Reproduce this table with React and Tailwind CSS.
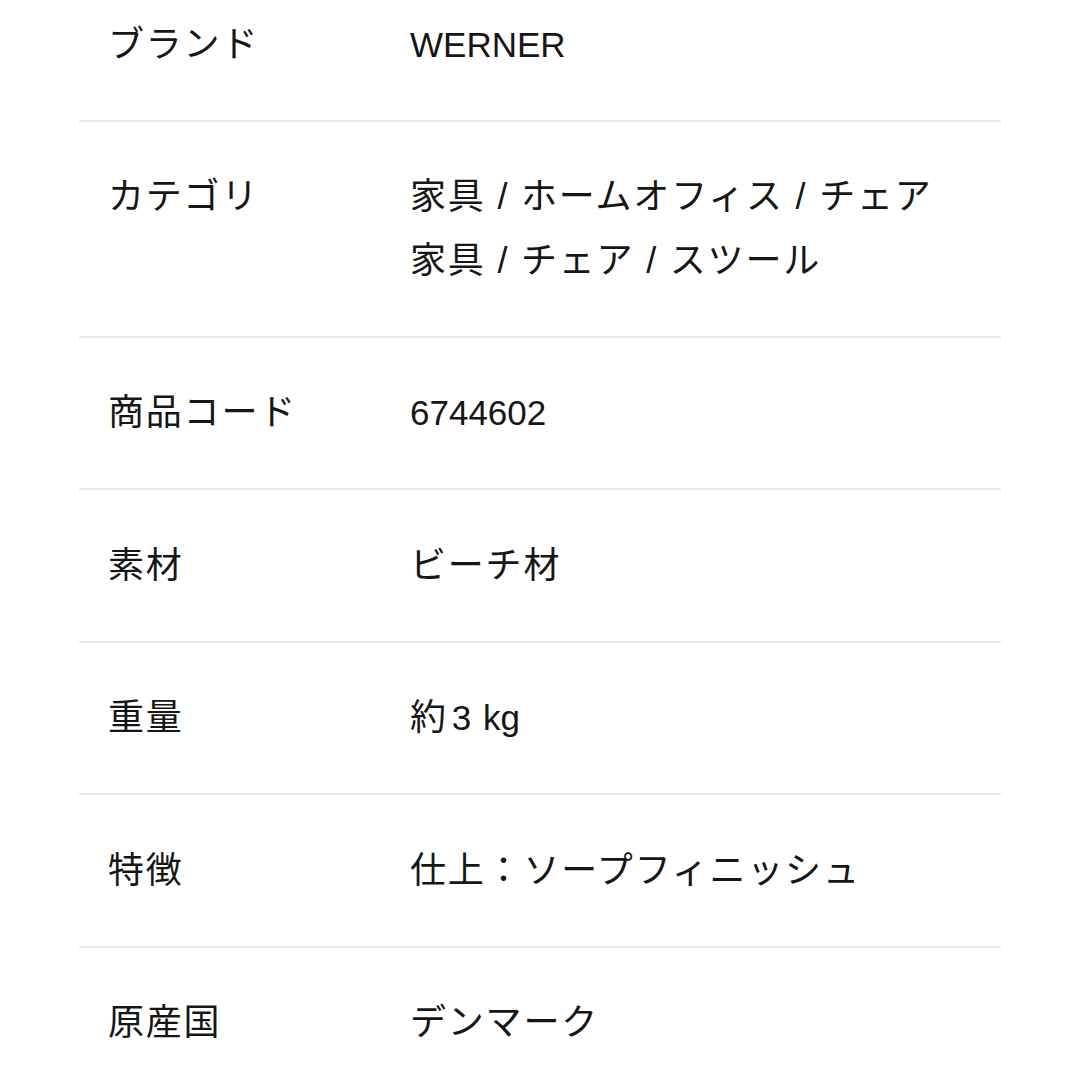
import React from "react";

const specs = [
  { label: "ブランド", values: ["WERNER"] },
  {
    label: "カテゴリ",
    values: ["家具 / ホームオフィス / チェア", "家具 / チェア / スツール"],
  },
  { label: "商品コード", values: ["6744602"] },
  { label: "素材", values: ["ビーチ材"] },
  { label: "重量", values: ["約3 kg"] },
  { label: "特徴", values: ["仕上：ソープフィニッシュ"] },
  { label: "原産国", values: ["デンマーク"] },
];

// latin runs are set without the kana tracking, like the original page
function Text({ text }) {
  const parts = text.split(/([A-Za-z0-9]+)/);
  return parts.map((part, i) => {
    if (!/^[A-Za-z0-9]+$/.test(part)) {
      return <React.Fragment key={i}>{part}</React.Fragment>;
    }
    // small gap when a latin run sits right after a kanji/kana
    const prev = parts[i - 1] || "";
    const gap = prev !== "" && !/\s$/.test(prev);
    return (
      <span key={i} className={"tracking-normal text-[35px] " + (gap ? "ml-[4px]" : "")}>
        {part}
      </span>
    );
  });
}

export default function App() {
  return (
    <div
      className="bg-white w-[1080px] h-[1080px] overflow-hidden text-[#161616]"
      style={{ fontFamily: '"Liberation Sans", "Noto Sans CJK JP", sans-serif' }}
    >
      <div className="mx-[79px] -mt-[31px]">
        {specs.map((row, i) => (
          <div
            key={row.label}
            className={
              "grid grid-cols-[331px_1fr] py-[43.5px] text-[36px] leading-[63.5px] tracking-[0.05em] " +
              (i < specs.length - 1 ? "border-b-2 border-[#e8e8e8]" : "")
            }
          >
            <div className="pl-[29px]">{row.label}</div>
            <div>
              {row.values.map((v) => (
                <div key={v}>
                  <Text text={v} />
                </div>
              ))}
            </div>
          </div>
        ))}
      </div>
    </div>
  );
}
